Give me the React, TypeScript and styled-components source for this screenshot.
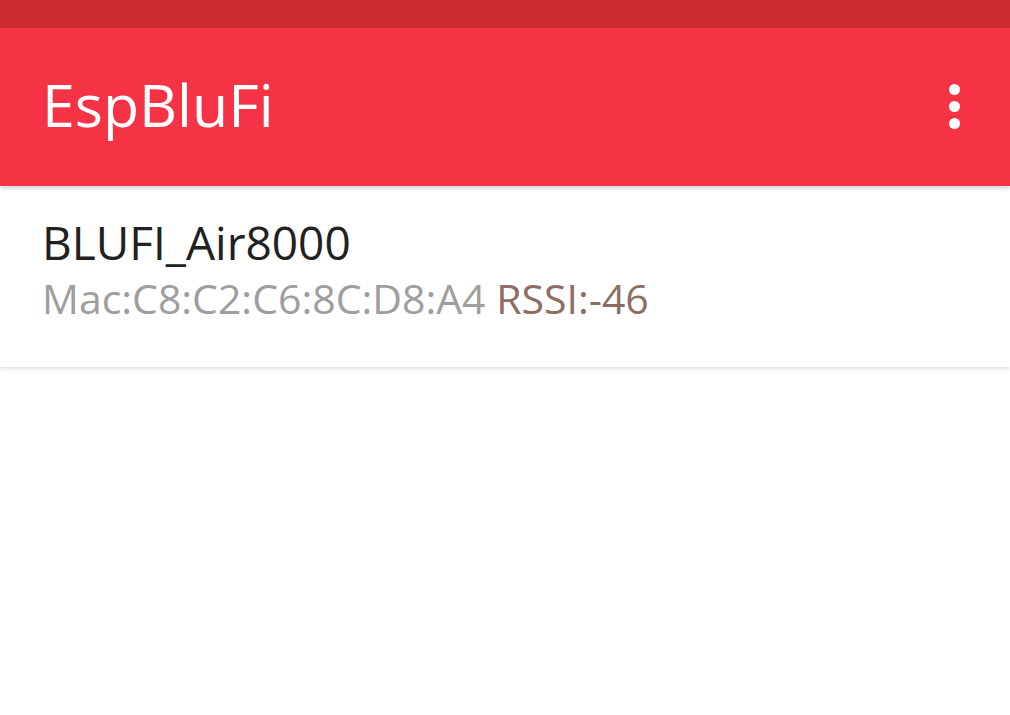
import React from "react";
import styled, { createGlobalStyle } from "styled-components";

const Global = createGlobalStyle`
  html, body { margin: 0; padding: 0; background: #ffffff; }
  body { font-family: "Open Sans", "Noto Sans", sans-serif; }
`;

const Screen = styled.div`
  width: 1010px;
  height: 715px;
  display: flex;
  flex-direction: column;
  background: #ffffff;
  overflow: hidden;
`;

const StatusBar = styled.div`
  height: 28px;
  background: #cc2d33;
  flex-shrink: 0;
`;

const AppBar = styled.header`
  height: 158px;
  background: #f53344;
  display: flex;
  align-items: center;
  justify-content: space-between;
  padding: 0 50px 0 42px;
  box-shadow: 0 2px 5px rgba(0, 0, 0, 0.18);
  position: relative;
  z-index: 2;
  flex-shrink: 0;
`;

const Title = styled.h1`
  margin: 0;
  color: #ffffff;
  font-family: "Open Sans", sans-serif;
  font-weight: 400;
  font-size: 59px;
  line-height: 1;
  letter-spacing: 0;
  margin-top: -6px;
`;

const MoreButton = styled.button`
  border: none;
  background: transparent;
  padding: 0;
  display: flex;
  flex-direction: column;
  gap: 6px;
  margin-top: -2px;
`;

const Dot = styled.span`
  display: block;
  width: 11px;
  height: 11px;
  border-radius: 50%;
  background: #ffffff;
`;

const DeviceItem = styled.div`
  height: 181px;
  background: #ffffff;
  padding: 28px 42px 0 42px;
  box-sizing: border-box;
  box-shadow: 0 2px 4px rgba(0, 0, 0, 0.12);
  position: relative;
  z-index: 1;
`;

const DeviceName = styled.div`
  font-family: "Open Sans", sans-serif;
  font-size: 46px;
  color: #212121;
  line-height: 56px;
`;

const DeviceInfo = styled.div`
  font-family: "Open Sans", sans-serif;
  font-size: 41px;
  line-height: 56px;
  color: #9e9e9e;
`;

const Rssi = styled.span`
  color: #8d6e63;
`;

export default function App() {
  return (
    <>
      <Global />
      <Screen>
        <StatusBar />
        <AppBar>
          <Title>EspBluFi</Title>
          <MoreButton aria-label="More options">
            <Dot />
            <Dot />
            <Dot />
          </MoreButton>
        </AppBar>
        <DeviceItem>
          <DeviceName>BLUFI_Air8000</DeviceName>
          <DeviceInfo>
            Mac:C8:C2:C6:8C:D8:A4 <Rssi>RSSI:-46</Rssi>
          </DeviceInfo>
        </DeviceItem>
      </Screen>
    </>
  );
}
